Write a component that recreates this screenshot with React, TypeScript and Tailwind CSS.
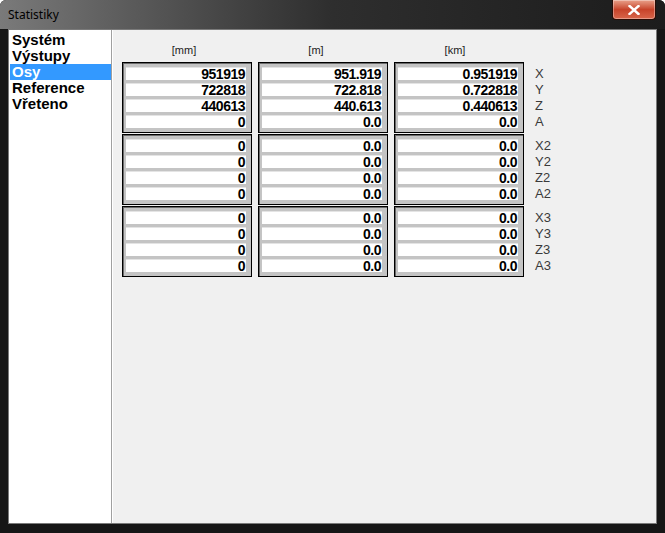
import React from "react";

const groups = [
  {
    labels: ["X", "Y", "Z", "A"],
    mm: ["951919", "722818", "440613", "0"],
    m: ["951.919", "722.818", "440.613", "0.0"],
    km: ["0.951919", "0.722818", "0.440613", "0.0"],
  },
  {
    labels: ["X2", "Y2", "Z2", "A2"],
    mm: ["0", "0", "0", "0"],
    m: ["0.0", "0.0", "0.0", "0.0"],
    km: ["0.0", "0.0", "0.0", "0.0"],
  },
  {
    labels: ["X3", "Y3", "Z3", "A3"],
    mm: ["0", "0", "0", "0"],
    m: ["0.0", "0.0", "0.0", "0.0"],
    km: ["0.0", "0.0", "0.0", "0.0"],
  },
];

const menu = ["Systém", "Výstupy", "Osy", "Reference", "Vřeteno"];

function ValueBox({ values }: { values: string[] }) {
  return (
    <div className="flex h-[71px] w-[130px] flex-col gap-[3px] border border-black bg-[#c4c4c4] pt-[4px] pr-[5px] pl-[3px] shadow-[inset_1px_1px_0_#6a6a6a]">
      {values.map((v, i) => (
        <div
          key={i}
          className="h-[13px] border-t border-[#e4e4e4] bg-white pr-[1px] text-right text-[14px] font-bold leading-[12px] tracking-[-0.5px] text-black"
        >
          {v}
        </div>
      ))}
    </div>
  );
}

export default function App() {
  return (
    <div className="flex h-[533px] w-[665px] flex-col overflow-hidden rounded-t-[6px] bg-[#161616] font-['Liberation_Sans',Arial,sans-serif]">
      {/* title bar */}
      <div className="flex h-[29px] shrink-0 items-start justify-between bg-gradient-to-r from-[#7a7a7a] via-[#2e2e2e] to-[#1c1c1c] pl-[8px]">
        <span className="mt-[7px] font-['Noto_Sans',sans-serif] text-[12px] leading-[16px] text-black">
          Statistiky
        </span>
        <div className="mr-[9px] flex h-[20px] w-[44px] items-center justify-center rounded-b-[4px] border border-t-0 border-[#2a0c05] bg-gradient-to-b from-[#e8a08a] via-[#c7432a] to-[#d9654a] shadow-[inset_0_0_0_1px_rgba(255,255,255,0.35)]">
          <svg width="12" height="10" viewBox="0 0 12 10">
            <path d="M1.5 1 L10.5 9 M10.5 1 L1.5 9" stroke="white" strokeWidth="2.4" strokeLinecap="square" />
          </svg>
        </div>
      </div>

      {/* client area */}
      <div className="mx-[8px] mb-[9px] flex flex-1 border border-[#7a7a7a]">
        <div className="flex w-[103px] flex-col border-r border-[#a0a0a0] bg-white pt-[2px]">
          {menu.map((item) => (
            <div
              key={item}
              className={`ml-[1px] h-[16px] pl-[2px] text-[15px] font-bold leading-[16px] ${
                item === "Osy" ? "bg-[#3399ff] text-white" : "text-black"
              }`}
            >
              {item}
            </div>
          ))}
        </div>

        <div className="flex flex-1 flex-col border-l border-white bg-[#f0f0f0] pt-[13px] pl-[9px]">
          <div className="mb-[5px] flex h-[14px] gap-[6px] text-[11px] leading-[14px] text-[#222]">
            <div className="w-[130px] pr-[6px] text-center">[mm]</div>
            <div className="w-[130px] pr-[14px] text-center">[m]</div>
            <div className="w-[130px] pr-[8px] text-center">[km]</div>
          </div>

          <div className="flex flex-col gap-[1px]">
            {groups.map((g, gi) => (
              <div key={gi} className="flex gap-[6px]">
                <ValueBox values={g.mm} />
                <ValueBox values={g.m} />
                <ValueBox values={g.km} />
                <div className="ml-[5px] flex flex-col gap-[3px] pt-[5px]">
                  {g.labels.map((l) => (
                    <div key={l} className="h-[13px] text-[13px] leading-[13px] text-[#3a3a3a]">
                      {l}
                    </div>
                  ))}
                </div>
              </div>
            ))}
          </div>
        </div>
      </div>
    </div>
  );
}
